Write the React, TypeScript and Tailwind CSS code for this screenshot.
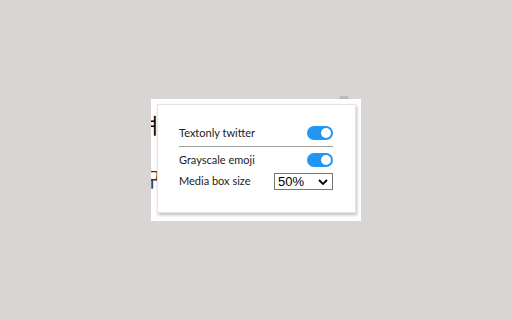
import React from "react";

function Toggle() {
  return (
    <div className="w-[26px] h-[14px] rounded-full bg-[#2196f3] flex items-center justify-end pr-[2px]">
      <div className="w-[10px] h-[10px] rounded-full bg-white" />
    </div>
  );
}

export default function App() {
  return (
    <div
      className="w-[512px] h-[320px] bg-[#d9d5d4] flex items-center justify-center"
      style={{ fontFamily: 'Lato, "Noto Sans", sans-serif' }}
    >
      <div className="relative w-[210px] h-[122px]">
        <div className="absolute right-[12px] top-[-3px] w-[10px] h-[6px] rounded-full bg-[#bdb9b8]" />
        <div className="relative w-[210px] h-[122px] bg-white pl-[6px] pt-[5px] overflow-hidden">
          <div
            className="absolute left-[-12px] top-[15px] text-[21px] leading-none text-black"
            style={{ fontFamily: '"Noto Sans CJK KR", sans-serif' }}
          >
            텨
          </div>
          <div
            className="absolute left-[-8px] top-[70px] text-[20px] leading-none text-[#333]"
            style={{ fontFamily: '"Noto Sans CJK KR", sans-serif' }}
          >
            구
          </div>
          <div className="relative w-[199px] h-[109px] bg-white border border-[#e4e4e4] shadow-[1px_2px_3px_rgba(0,0,0,0.25)] pl-[21px] pr-[22px] pt-[21px] flex flex-col text-[11px] text-[#222]">
            <div className="flex items-center justify-between h-[14px]">
              <span>Textonly twitter</span>
              <Toggle />
            </div>
            <div className="h-px bg-[#a0a0a0] mt-[6px] mb-[6px]" />
            <div className="flex items-center justify-between h-[14px]">
              <span>Grayscale emoji</span>
              <Toggle />
            </div>
            <div className="flex items-center justify-between h-[17px] mt-[6px]">
              <span>Media box size</span>
              <div
                className="w-[59px] h-[17px] border border-[#767676] flex items-center justify-between pl-[3px] pr-[4px] text-[13px] text-black"
                style={{ fontFamily: '"Liberation Sans", sans-serif' }}
              >
                <span>50%</span>
                <svg width="10" height="6" viewBox="0 0 10 6">
                  <path d="M1 1 L5 5 L9 1" fill="none" stroke="black" strokeWidth="1.8" />
                </svg>
              </div>
            </div>
          </div>
        </div>
      </div>
    </div>
  );
}
